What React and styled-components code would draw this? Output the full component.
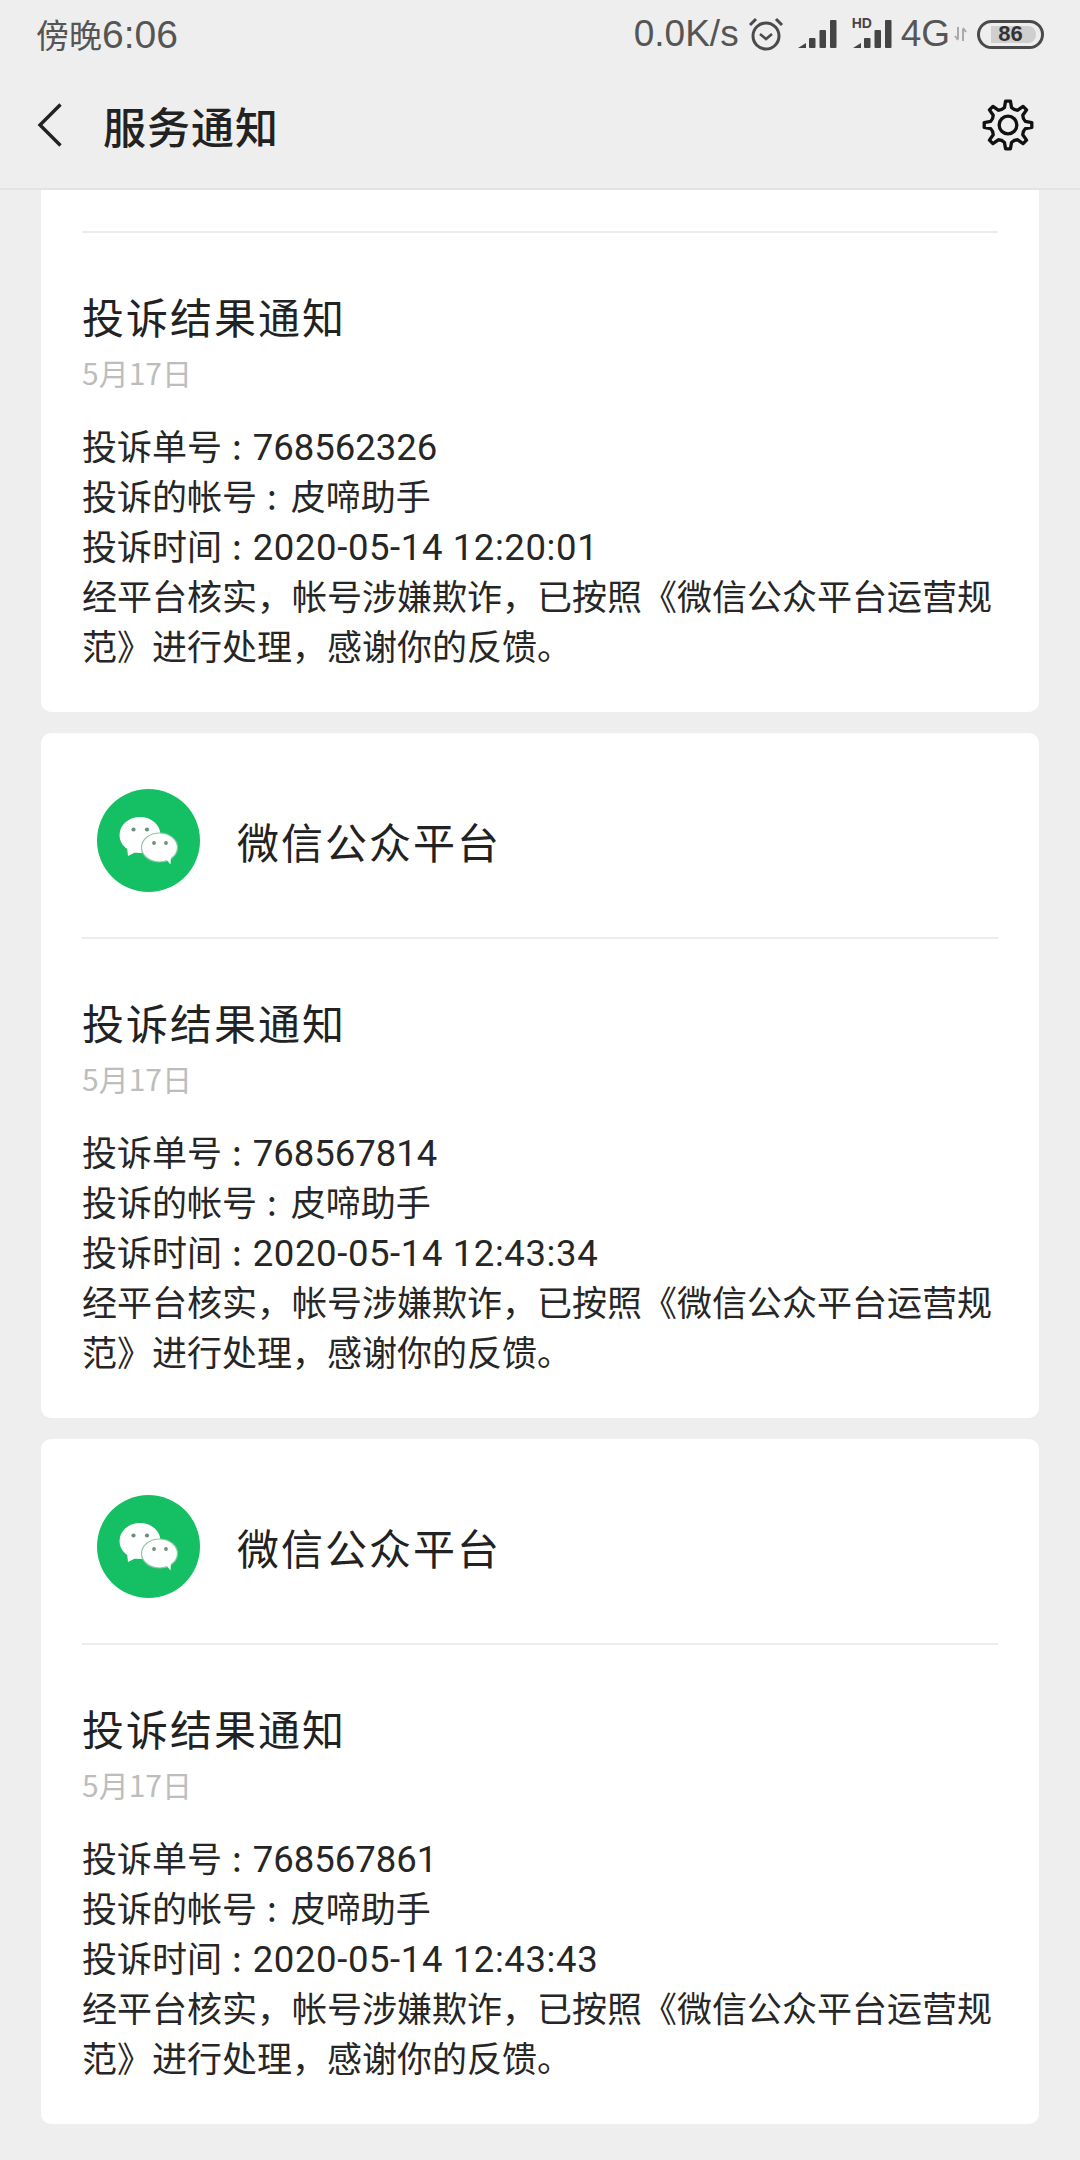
import styled, { createGlobalStyle } from 'styled-components'

const GlobalStyle = createGlobalStyle`
  html, body {
    margin: 0;
    padding: 0;
    background: #eeeeee;
  }
  body {
    font-family: "Noto Sans CJK SC", "Noto Sans", sans-serif;
  }
`

const notices = [
  { id: 768567814, time: '2020-05-14 12:43:34' },
  { id: 768567861, time: '2020-05-14 12:43:43' },
]

// 8 tooth gear outline, centre 25,25
function gearPath() {
  const teeth = 8
  const pts = []
  for (let i = 0; i < teeth; i++) {
    const a = (i / teeth) * Math.PI * 2 - Math.PI / 2
    const step = (Math.PI * 2) / teeth
    const p = (r, o) => {
      const x = 25 + r * Math.cos(a + o * step)
      const y = 25 + r * Math.sin(a + o * step)
      return `${x.toFixed(2)} ${y.toFixed(2)}`
    }
    pts.push(`${i === 0 ? 'M' : 'L'}${p(17, -0.26)} L${p(23, -0.13)} L${p(23, 0.13)} L${p(17, 0.26)}`)
    pts.push(`Q${p(15.4, 0.5)} ${p(17, 0.74)}`)
  }
  return pts.join(' ') + ' Z'
}

function Notice({ id, time }) {
  return (
    <>
      <NoticeTitle>投诉结果通知</NoticeTitle>
      <NoticeDate>5月17日</NoticeDate>
      <NoticeBody>
        <BodyLine>投诉单号<Colon>:</Colon><Value>{id}</Value></BodyLine>
        <BodyLine>投诉的帐号<Colon>:</Colon>皮啼助手</BodyLine>
        <BodyLine>投诉时间<Colon>:</Colon><Value $wide>{time}</Value></BodyLine>
        <BodyLine>经平台核实，帐号涉嫌欺诈，已按照《微信公众平台运营规范》进行处理，感谢你的反馈。</BodyLine>
      </NoticeBody>
    </>
  )
}

function WeChatAvatar() {
  return (
    <svg width="103" height="103" viewBox="0 0 103 103">
      <circle cx="51.5" cy="51.5" r="51.5" fill="#14c063" />
      <ellipse cx="43" cy="46" rx="20.5" ry="18" fill="#fff" />
      <path d="M30 58 L31 67 L41 62 Z" fill="#fff" />
      <ellipse cx="62.5" cy="58.5" rx="18" ry="14.5" fill="#fff" stroke="#8dc7a4" strokeWidth="1.2" />
      <path d="M69 70 L73.5 75.5 L74 67 Z" fill="#fff" />
      <circle cx="36.5" cy="40.5" r="2.1" fill="#6d8f7c" />
      <circle cx="50" cy="40.5" r="2.1" fill="#6d8f7c" />
      <circle cx="57" cy="54" r="1.9" fill="#6d8f7c" />
      <circle cx="69" cy="54" r="1.9" fill="#6d8f7c" />
    </svg>
  )
}

function SignalBars() {
  return (
    <svg width="40" height="30" viewBox="0 0 40 30">
      <path d="M0 29 L8 24 L8 29 Z" fill="#444" />
      <rect x="11" y="19" width="6.5" height="10" rx="1" fill="#444" />
      <rect x="21.5" y="11" width="6.5" height="18" rx="1" fill="#444" />
      <rect x="32" y="1" width="6.5" height="28" rx="1" fill="#444" />
    </svg>
  )
}

export default function App() {
  return (
    <Page>
      <GlobalStyle />
      <Header>
        <StatusBar>
          <StatusTime><small>傍晚</small>6:06</StatusTime>
          <StatusRight>
            <StatusText>0.0K/s</StatusText>
            <AlarmIcon width="36" height="36" viewBox="0 0 36 36" fill="none" stroke="#4a4a4a">
              <circle cx="18" cy="20" r="13" strokeWidth="3" />
              <path d="M12 18 L18 23 L24 18" strokeWidth="2.6" />
              <path d="M2 9 L8 3 M28 3 L34 9" strokeWidth="3" />
            </AlarmIcon>
            <SignalBars />
            <HdSignal>
              <HdMark>HD</HdMark>
              <SignalBars />
            </HdSignal>
            <NetworkText>4G</NetworkText>
            <svg width="13" height="14" viewBox="0 0 13 14" fill="none" stroke="#aaa" strokeWidth="2">
              <path d="M4 0 V12 M1 9 L4 13 M9 14 V2 M12 5 L9 1" />
            </svg>
            <Battery>
              <BatteryLevel />
              <BatteryValue>86</BatteryValue>
            </Battery>
          </StatusRight>
        </StatusBar>
        <NavBar>
          <NavLeft>
            <svg width="26" height="44" viewBox="0 0 26 44" fill="none" stroke="#222" strokeWidth="3.4">
              <path d="M23.5 1.5 L3 22 L23.5 42.5" />
            </svg>
            <NavTitle>服务通知</NavTitle>
          </NavLeft>
          <svg width="52" height="52" viewBox="0 0 50 50" fill="none" stroke="#111" strokeWidth="3.2" strokeLinejoin="round">
            <path d={gearPath()} />
            <circle cx="25" cy="25" r="8.5" />
          </svg>
        </NavBar>
      </Header>
      <CardList>
        <Card $clipped>
          <Divider />
          <Notice id={768562326} time="2020-05-14 12:20:01" />
        </Card>
        {notices.map((n) => (
          <Card key={n.id}>
            <AccountRow>
              <WeChatAvatar />
              <AccountName>微信公众平台</AccountName>
            </AccountRow>
            <Divider />
            <Notice id={n.id} time={n.time} />
          </Card>
        ))}
      </CardList>
    </Page>
  )
}

const Page = styled.div`
  width: 1080px;
  height: 2160px;
  overflow: hidden;
  background: #eeeeee;
`

const Header = styled.header`
  height: 190px;
  box-sizing: border-box;
  border-bottom: 2px solid #e3e3e3;
  background: #eeeeee;
`

const StatusBar = styled.div`
  height: 68px;
  padding: 0 36px;
  display: flex;
  align-items: center;
  justify-content: space-between;
  color: #555;
`

const StatusTime = styled.div`
  font-family: "Liberation Sans", "Noto Sans CJK SC", sans-serif;
  font-size: 39px;

  small {
    font-size: 33px;
  }
`

const StatusRight = styled.div`
  display: flex;
  align-items: center;
`

const StatusText = styled.span`
  font-family: "Liberation Sans", sans-serif;
  font-size: 37px;
  color: #555;
  margin-right: 9px;
`

const AlarmIcon = styled.svg`
  margin-right: 14px;
`

const HdSignal = styled.div`
  position: relative;
  display: flex;
  margin-left: 15px;
`

const HdMark = styled.span`
  position: absolute;
  left: -1px;
  top: -3px;
  font-family: "Liberation Sans", sans-serif;
  font-size: 14px;
  line-height: 14px;
  font-weight: 700;
  color: #444;
  background: #eeeeee;
  padding-right: 1px;
`

const NetworkText = styled.span`
  font-family: "Liberation Sans", sans-serif;
  font-size: 37px;
  color: #555;
  margin: 0 4px 0 8px;
`

const Battery = styled.div`
  position: relative;
  width: 67px;
  height: 29px;
  margin-left: 10px;
  box-sizing: border-box;
  border: 3px solid #4a4a4a;
  border-radius: 15px;
  display: flex;
  align-items: center;
  justify-content: center;
  overflow: hidden;
`

const BatteryLevel = styled.div`
  position: absolute;
  left: 11px;
  top: 3px;
  bottom: 3px;
  width: 45px;
  border-radius: 0 8px 8px 0;
  background: #cfcfcf;
`

const BatteryValue = styled.span`
  position: relative;
  font-family: "Liberation Sans", sans-serif;
  font-size: 22px;
  font-weight: 700;
  color: #333;
`

const NavBar = styled.div`
  height: 118px;
  padding: 0 46px 0 37px;
  display: flex;
  align-items: center;
  justify-content: space-between;
  margin-top: -2px;
`

const NavLeft = styled.div`
  display: flex;
  align-items: center;
  gap: 40px;
`

const NavTitle = styled.h1`
  margin: 0;
  font-size: 43px;
  line-height: 60px;
  letter-spacing: 1px;
  font-weight: 500;
  color: #222;
`

const CardList = styled.main`
  padding: 0 41px;
  display: flex;
  flex-direction: column;
  gap: 21px;
`

const Card = styled.section`
  background: #fff;
  border-radius: ${(p) => (p.$clipped ? '0 0 10px 10px' : '10px')};
  padding: ${(p) => (p.$clipped ? '41px' : '56px')} 41px 42px;
`

const AccountRow = styled.div`
  display: flex;
  align-items: center;
  gap: 37px;
  padding: 0 0 45px 15px;
`

const AccountName = styled.div`
  font-size: 42px;
  line-height: 60px;
  letter-spacing: 2px;
  color: #222;
`

const Divider = styled.hr`
  margin: 0;
  border: 0;
  height: 2px;
  background: #ececec;
`

const NoticeTitle = styled.h2`
  margin: 53px 0 0;
  font-size: 42px;
  line-height: 60px;
  letter-spacing: 2px;
  font-weight: 400;
  color: #222;
`

const NoticeDate = styled.div`
  margin-top: 4px;
  font-size: 30px;
  line-height: 44px;
  color: #bdbdbd;
`

const NoticeBody = styled.div`
  margin-top: 26px;
  font-size: 35px;
  line-height: 50px;
  color: #262626;
`

const BodyLine = styled.div`
  min-height: 50px;
`

const Colon = styled.span`
  margin: 0 14px 0 10px;
`

const Value = styled.span`
  font-family: Roboto, sans-serif;
  font-size: 36.5px;
  line-height: 1;
  margin-left: -3px;
  letter-spacing: ${(p) => (p.$wide ? '0.6px' : '0')};
`
